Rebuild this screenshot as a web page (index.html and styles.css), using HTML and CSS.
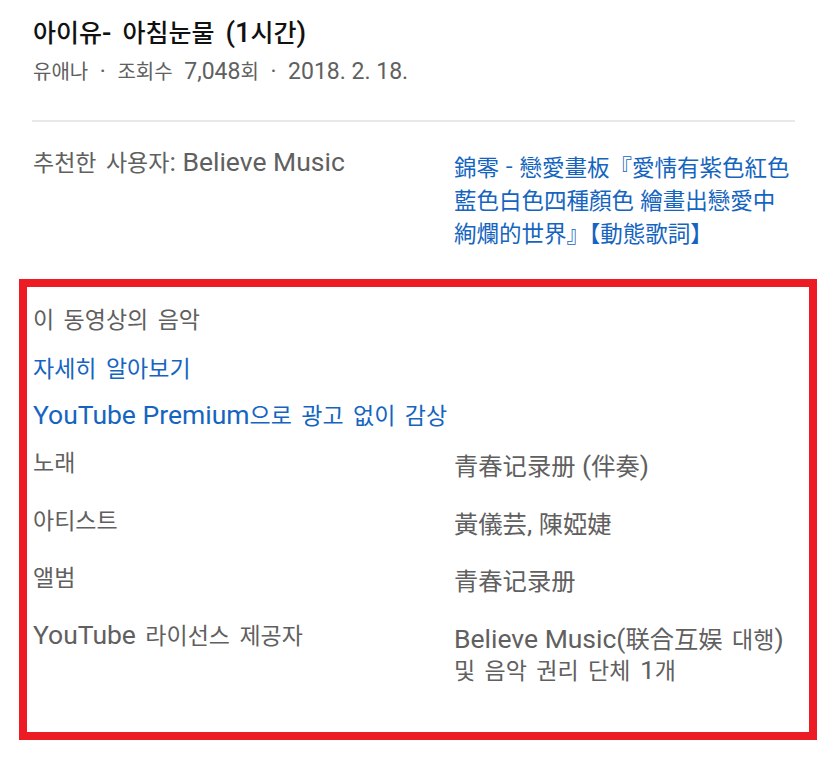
FILE: index.html
```html
<!DOCTYPE html>
<html lang="ko">
<head>
<meta charset="utf-8">
<link rel="stylesheet" href="styles.css">
</head>
<body>
<div class="page">
  <header class="head">
    <h1 class="title">아이유<span class="en">-</span> 아침눈물 <span class="en">(1</span>시간<span class="en">)</span></h1>
    <p class="meta">유애나 <span class="en">·</span> 조회수 <span class="en">7,048</span>회 <span class="en">·</span> <span class="en">2018. 2. 18.</span></p>
  </header>
  <hr class="divider">
  <section class="rec">
    <div class="rec-label">추천한 사용자<span class="en">: Believe Music</span></div>
    <a class="rec-link">錦零 - 戀愛畫板『愛情有紫色紅色藍色白色四種顏色 繪畫出戀愛中絢爛的世界』【動態歌詞】</a>
  </section>
  <section class="music">
    <div class="music-head">이 동영상의 음악</div>
    <a class="link">자세히 알아보기</a>
    <a class="link link-premium"><span class="en">YouTube Premium</span>으로 광고 없이 감상</a>
    <dl class="rows">
      <dt>노래</dt>
      <dd><span class="zh">青春记录册</span><span class="en"> (</span><span class="zh">伴奏</span><span class="en">)</span></dd>
      <dt>아티스트</dt>
      <dd><span class="zh">黃儀芸</span><span class="en">, </span><span class="zh">陳婭婕</span></dd>
      <dt>앨범</dt>
      <dd><span class="zh">青春记录册</span></dd>
      <dt><span class="en">YouTube</span> 라이선스 제공자</dt>
      <dd><span class="en">Believe Music(</span><span class="zh">联合互娱</span> 대행<span class="en">)</span><br>및 음악 권리 단체 <span class="en">1</span>개</dd>
    </dl>
  </section>
</div>
</body>
</html>
```
FILE: styles.css
```css
html, body {
  margin: 0;
  padding: 0;
  background: #fff;
}
body {
  font-family: "Noto Sans CJK KR", Roboto, sans-serif;
  color: #606060;
  font-size: 23px;
  word-spacing: 3px;
}
.page {
  width: 828px;
  height: 765px;
  overflow: hidden;
}
.en {
  font-family: Roboto, "Noto Sans CJK KR", sans-serif;
  font-size: 26.5px;
  line-height: 1;
  word-spacing: 0;
}
.zh {
  font-family: "Noto Sans CJK SC", sans-serif;
  font-size: 24.3px;
  line-height: 1;
  word-spacing: 0;
}
.head {
  padding: 14px 33px 0;
}
.title {
  margin: 0;
  font-size: 25px;
  font-weight: 500;
  line-height: 34px;
  color: #111;
  word-spacing: 4px;
}
.title .en {
  font-size: 27.5px;
}
.meta {
  margin: 8px 0 0;
  font-size: 20px;
  line-height: 30px;
  color: #606060;
  word-spacing: 6px;
}
.meta .en {
  font-size: 23px;
}
.divider {
  border: 0;
  height: 2px;
  background: #e8e8e8;
  margin: 34px 33px 0 32px;
}
.rec {
  display: grid;
  grid-template-columns: 421px 1fr;
  align-items: start;
  padding: 22px 33px 0 33px;
}
.rec-label {
  line-height: 34px;
}
.rec-link {
  padding-top: 6px;
  color: #1565c0;
  font-size: 22.5px;
  line-height: 33px;
  word-spacing: 0;
  font-family: "Noto Sans CJK TC", sans-serif;
}
.music {
  margin: 30px 0 0 19px;
  width: 776px;
  height: 431px;
  border: 8px solid #ed1c24;
  padding: 14px 0 0 6px;
  box-sizing: content-box;
  display: flex;
  flex-direction: column;
  align-items: flex-start;
}
.music-head {
  line-height: 34px;
}
.link {
  color: #1565c0;
  line-height: 34px;
  margin-top: 15px;
}
.link-premium {
  margin-top: 13px;
}
.rows {
  margin: 13px 0 0;
  display: grid;
  grid-template-columns: 421px 1fr;
  row-gap: 20.5px;
  width: 776px;
}
.rows dt {
  margin: 0;
  line-height: 34px;
}
.rows dd {
  margin: 0;
  padding-top: 6px;
  line-height: 31px;
}
```
